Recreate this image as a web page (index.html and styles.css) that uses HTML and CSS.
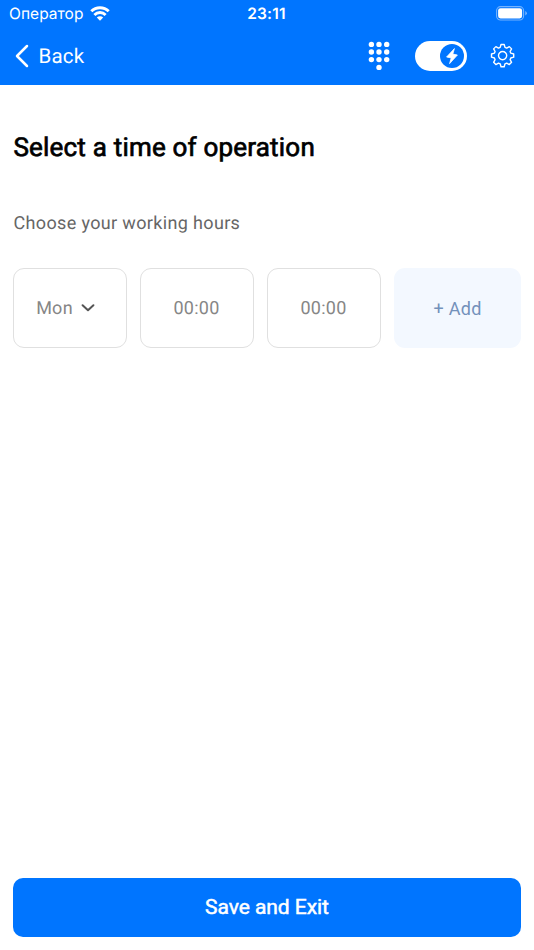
FILE: index.html
```html
<!DOCTYPE html>
<html lang="en">
<head>
<meta charset="utf-8">
<title>Working hours</title>
<link rel="stylesheet" href="styles.css">
</head>
<body>
<div class="screen">
  <header class="top">
    <div class="status">
      <div class="carrier"><span class="carrier-name">Оператор</span>
        <svg class="wifi" width="20" height="15" viewBox="0 0 20 15"><g fill="none" stroke="#fff" stroke-width="2.9"><path d="M1.3 5.3a12.3 12.3 0 0 1 17.4 0"/><path d="M4.4 8.9a7.9 7.9 0 0 1 11.2 0"/></g><path fill="#fff" d="M10 14.8 6.8 11.6a4.5 4.5 0 0 1 6.4 0z"/></svg>
      </div>
      <div class="clock">23:11</div>
      <svg class="battery" width="31" height="15" viewBox="0 0 31 15"><rect x=".6" y=".6" width="27" height="13.4" rx="4" fill="none" stroke="#fff" stroke-opacity=".45" stroke-width="1.1"/><rect x="2.1" y="2.2" width="24" height="10.2" rx="2.4" fill="#fff"/><path d="M29.3 5v4.6q1.5-.8 1.5-2.3T29.3 5z" fill="#fff" fill-opacity=".5"/></svg>
    </div>
    <nav class="bar">
      <a class="back">
        <svg width="14" height="24" viewBox="0 0 14 24"><path d="M12 2 2 12l10 10" fill="none" stroke="#fff" stroke-width="2.5" stroke-linecap="round" stroke-linejoin="round"/></svg>
        <span class="back-label">Back</span>
      </a>
      <svg class="dots" width="22" height="30" viewBox="0 0 22 30" fill="#fff"><circle cx="3.4" cy="3.4" r="2.7"/><circle cx="11" cy="3.4" r="2.7"/><circle cx="18.7" cy="3.4" r="2.7"/><circle cx="3.4" cy="11" r="2.7"/><circle cx="11" cy="11" r="2.7"/><circle cx="18.7" cy="11" r="2.7"/><circle cx="3.4" cy="18.6" r="2.7"/><circle cx="11" cy="18.6" r="2.7"/><circle cx="18.7" cy="18.6" r="2.7"/><circle cx="11" cy="26.4" r="2.7"/></svg>
      <div class="toggle"><div class="knob"><svg width="24" height="24" viewBox="0 0 24 24"><path d="M14.4 4.6 6.6 13l4.6.9L9.6 19.6l7.8-8.6-4.6-.9z" fill="#fff" stroke="#fff" stroke-width=".8" stroke-linejoin="round"/></svg></div></div>
      <svg class="gear" width="26" height="26" viewBox="-12.6 -12.6 26 26" fill="none" stroke="#fff" stroke-width="1.4" stroke-linejoin="round"><circle r="4.1"/><path d="M-1.6-11.1H1.6L2.4-8.2 4.1-7.5 6.72-8.98 8.98-6.72 7.5-4.1 8.2-2.4 11.1-1.6V1.6L8.2 2.4 7.5 4.1 8.98 6.72 6.72 8.98 4.1 7.5 2.4 8.2 1.6 11.1H-1.6L-2.4 8.2-4.1 7.5-6.72 8.98-8.98 6.72-7.5 4.1-8.2 2.4-11.1 1.6V-1.6L-8.2-2.4-7.5-4.1-8.98-6.72-6.72-8.98-4.1-7.5-2.4-8.2z"/></svg>
    </nav>
  </header>
  <main class="content">
    <h1 class="title">Select a time of operation</h1>
    <p class="hint">Choose your working hours</p>
    <div class="slots">
      <div class="slot day"><span>Mon</span><svg width="14" height="9" viewBox="0 0 14 9"><path d="M1.6 1.3 7 6.3l5.4-5" fill="none" stroke="#555" stroke-width="2" stroke-linecap="round" stroke-linejoin="round"/></svg></div>
      <div class="slot">00:00</div>
      <div class="slot">00:00</div>
      <button class="add">+ Add</button>
    </div>
  </main>
  <footer class="footer"><button class="save">Save and Exit</button></footer>
</div>
</body>
</html>
```
FILE: styles.css
```css
* { box-sizing: border-box; }
body { margin: 0; background: #fff; font-family: Roboto, "Liberation Sans", sans-serif; text-rendering: geometricPrecision; }
svg { display: block; flex: none; }
.screen { height: 950px; display: flex; flex-direction: column; }
.top { height: 85.3px; background: #0075ff; color: #fff; flex: none; }
.status { height: 28px; display: grid; grid-template-columns: 1fr auto 1fr; align-items: center; padding: 0 7px 0 9px; font-family: Inter, sans-serif; }
.carrier { display: flex; align-items: center; gap: 6px; font-size: 15.5px; line-height: 28px; }
.carrier-name { letter-spacing: 0.05px; }
.wifi { margin-top: -2px; }
.clock { font-size: 15.5px; font-weight: 600; letter-spacing: 0.2px; margin-right: 3px; margin-top: -1px; }
.battery { justify-self: end; margin-top: -1px; }
.bar { height: 56px; display: flex; align-items: center; padding: 0 18px 0 15px; }
.back { display: flex; align-items: center; gap: 9.5px; flex: 1; font-size: 20.5px; line-height: 28px; letter-spacing: 0.2px; }
.back-label { padding-top: 1.5px; }
.dots { margin-right: 24.5px; margin-top: -1px; }
.toggle { width: 52.5px; height: 30px; border-radius: 15px; background: #fff; display: flex; justify-content: flex-end; align-items: center; padding-right: 3px; margin-right: 23px; }
.knob { width: 24px; height: 24px; border-radius: 50%; background: #0075ff; }
.content { flex: 1; padding: 0 13px; }
.title { margin: 46.5px 0 0; font-size: 26px; line-height: 32px; font-weight: 400; letter-spacing: 0.2px; color: #000; -webkit-text-stroke: 0.7px #000; padding-left: 0.4px; }
.hint { margin: 48px 0 0; font-size: 18px; line-height: 24px; letter-spacing: 0.35px; color: #666; padding-left: 0.5px; }
.slots { margin-top: 32.6px; display: grid; grid-template-columns: 114px 114px 114px 1fr; gap: 13px; height: 80px; }
.slot { border: 1.5px solid #e0e0e0; border-radius: 11px; display: flex; align-items: center; justify-content: center; font-size: 18px; letter-spacing: 0.25px; color: #868686; padding: 1px 1px 0 0; }
.day { gap: 8.5px; padding-right: 8.5px; }
.add { border: 0; border-radius: 11px; background: #f3f8ff; color: #7391bb; font: 18px Roboto, sans-serif; letter-spacing: 0.3px; }
.footer { padding: 0 13px 13px; }
.save { display: block; width: 100%; height: 59.5px; border: 0; border-radius: 10px; background: #0075ff; color: #fff; font: 21px Roboto, sans-serif; letter-spacing: -0.05px; -webkit-text-stroke: 0.5px #fff; }
```
